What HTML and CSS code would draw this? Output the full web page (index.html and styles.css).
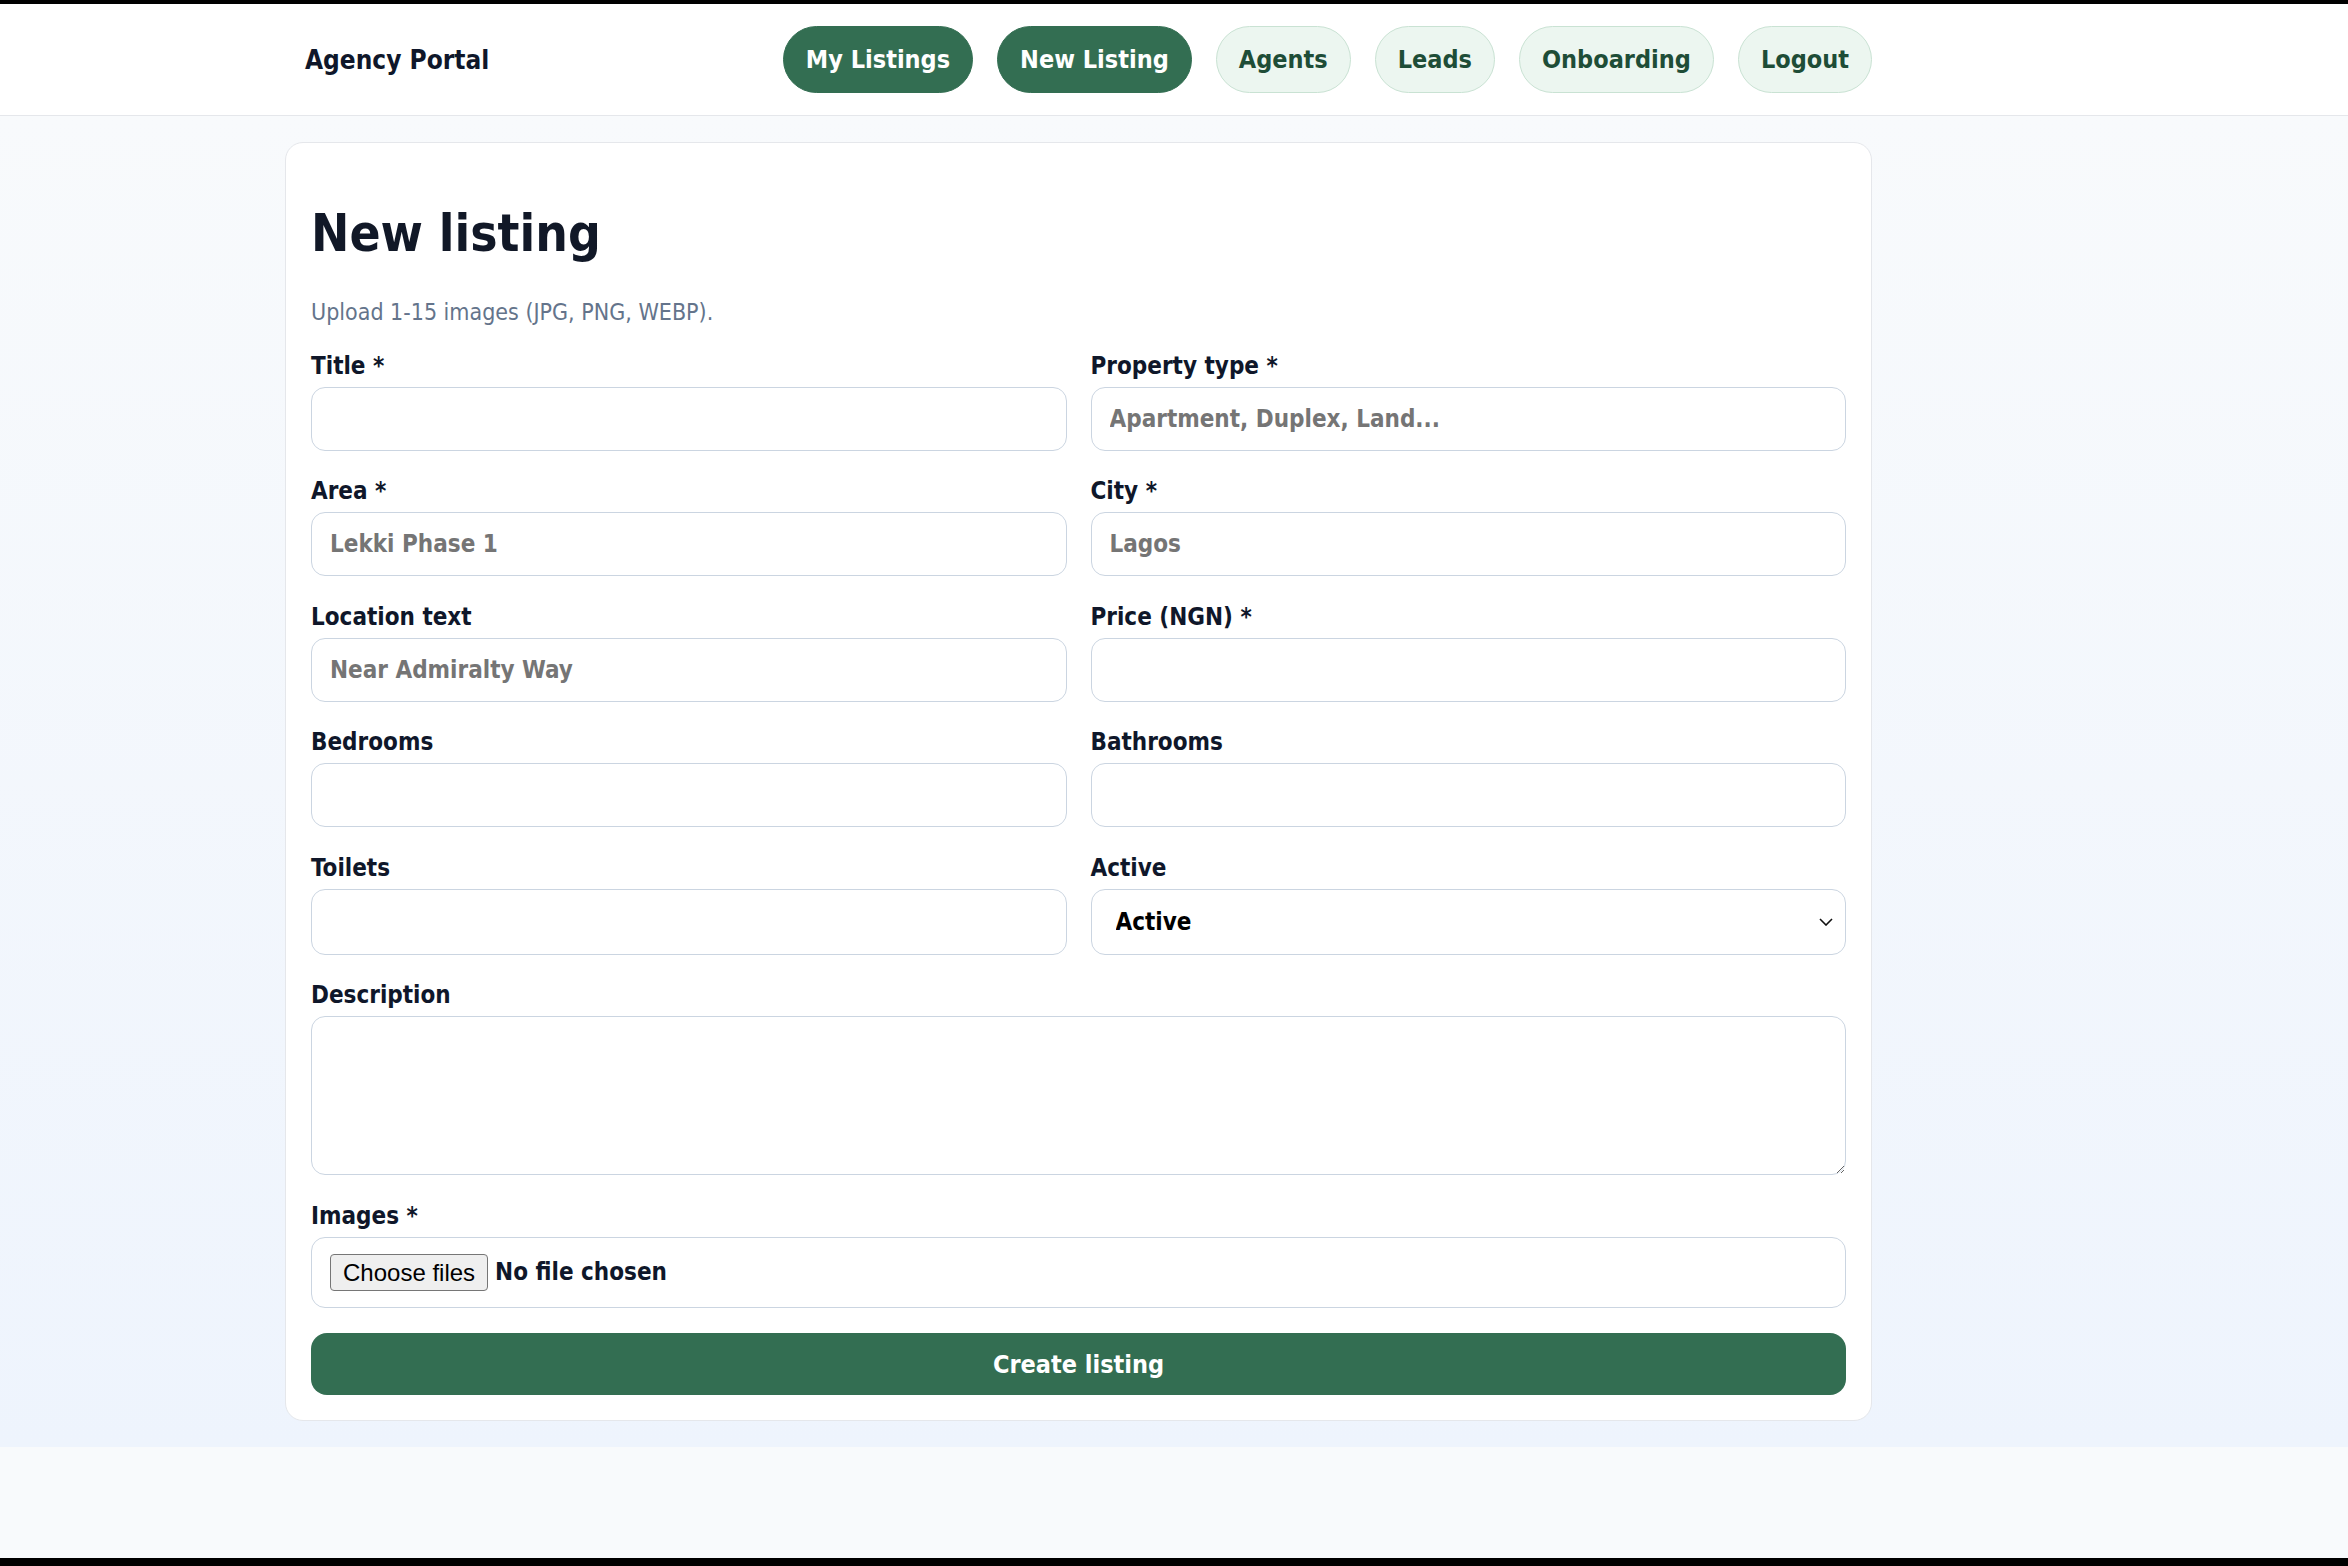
FILE: index.html
```html
<!DOCTYPE html>
<html lang="en">
<head>
  <meta charset="UTF-8" />
  <meta name="viewport" content="width=device-width, initial-scale=1.0" />
  <title>Agency Portal - New listing</title>
  <link rel="stylesheet" href="styles.css">
</head>
<body>
  <header class="topbar">
    <div class="topbar-inner">
      <div class="brand">Agency Portal</div>
      <nav class="nav">
        <a class="pill pill-active" href="#">My Listings</a>
        <a class="pill pill-active" href="#">New Listing</a>
        <a class="pill" href="#">Agents</a>
        <a class="pill" href="#">Leads</a>
        <a class="pill" href="#">Onboarding</a>
        <a class="pill" href="#">Logout</a>
      </nav>
    </div>
  </header>

  <main class="page">
    <section class="card">
      <h1>New listing</h1>
      <p class="hint">Upload 1-15 images (JPG, PNG, WEBP).</p>

      <form class="form-grid" onsubmit="return false">
        <div class="field">
          <label class="lbl" for="title">Title *</label>
          <input id="title" type="text" />
        </div>
        <div class="field">
          <label class="lbl" for="ptype">Property type *</label>
          <input id="ptype" type="text" placeholder="Apartment, Duplex, Land..." />
        </div>

        <div class="field">
          <label class="lbl" for="area">Area *</label>
          <input id="area" type="text" placeholder="Lekki Phase 1" />
        </div>
        <div class="field">
          <label class="lbl" for="city">City *</label>
          <input id="city" type="text" placeholder="Lagos" />
        </div>

        <div class="field">
          <label class="lbl" for="loc">Location text</label>
          <input id="loc" type="text" placeholder="Near Admiralty Way" />
        </div>
        <div class="field">
          <label class="lbl" for="price">Price (NGN) *</label>
          <input id="price" type="number" />
        </div>

        <div class="field">
          <label class="lbl" for="beds">Bedrooms</label>
          <input id="beds" type="number" />
        </div>
        <div class="field">
          <label class="lbl" for="baths">Bathrooms</label>
          <input id="baths" type="number" />
        </div>

        <div class="field">
          <label class="lbl" for="toilets">Toilets</label>
          <input id="toilets" type="number" />
        </div>
        <div class="field">
          <label class="lbl" for="active">Active</label>
          <div class="select-wrap">
            <select id="active">
              <option>Active</option>
              <option>Inactive</option>
            </select>
            <svg class="chevron" width="14" height="8" viewBox="0 0 14 8">
              <path d="M1 1l6 6 6-6" fill="none" stroke="#111" stroke-width="1.6" />
            </svg>
          </div>
        </div>

        <div class="field wide">
          <label class="lbl" for="desc">Description</label>
          <textarea id="desc"></textarea>
        </div>

        <div class="field wide">
          <label class="lbl" for="images">Images *</label>
          <label class="file-box">
            <input id="images" type="file" multiple accept="image/jpeg,image/png,image/webp" />
            <span class="file-btn">Choose files</span>
            <span class="file-name">No file chosen</span>
          </label>
        </div>

        <button class="submit wide" type="submit">Create listing</button>
      </form>
    </section>
  </main>
</body>
</html>
```

FILE: styles.css
```css
html {
  background: #000;
}

body {
  margin: 4px 0 0;
  height: 1554px;
  background: #f8fafc;
  font-family: 'DejaVu Sans', Verdana, sans-serif;
  font-stretch: condensed;
  color: #0f172a;
}

/* top navigation */
.topbar {
  background: #fff;
  border-bottom: 1px solid #e5e7eb;
  padding: 22px 0;
}

.topbar-inner {
  width: 1587px;
  margin-left: 285px;
  padding-left: 20px;
  box-sizing: border-box;
  display: flex;
  align-items: center;
  justify-content: space-between;
}

.brand {
  font-size: 26px;
  font-weight: bold;
}

.nav {
  display: flex;
  gap: 24px;
}

.pill {
  display: flex;
  align-items: center;
  height: 67px;
  box-sizing: border-box;
  padding: 0 22px;
  border-radius: 999px;
  border: 1.5px solid #c9e2d3;
  background: #ecf6f0;
  color: #1e4d37;
  font-size: 25px;
  font-weight: bold;
  text-decoration: none;
}

.pill-active {
  background: #336e52;
  border-color: #336e52;
  color: #fff;
}

/* main area */
.page {
  background: linear-gradient(180deg, #f8fafc 0%, #eef4fd 100%);
  padding: 26px 0;
}

.card {
  width: 1587px;
  margin-left: 285px;
  box-sizing: border-box;
  background: #fff;
  border: 1px solid #e5e7eb;
  border-radius: 18px;
  padding: 0 25px 25px;
}

.card h1 {
  font-size: 51px;
  line-height: 1.16;
  margin: 61px 0 32px;
  color: #111827;
}

.hint {
  font-size: 23px;
  line-height: 1.5;
  color: #64748b;
  margin: 0 0 21px;
  font-weight: normal;
}

/* form */
.form-grid {
  display: grid;
  grid-template-columns: 1fr 1fr;
  column-gap: 24px;
  row-gap: 25.5px;
}

.wide {
  grid-column: 1 / -1;
}

.field {
  display: flex;
  flex-direction: column;
}

.lbl {
  font-size: 24px;
  line-height: 30px;
  font-weight: bold;
  margin-bottom: 6px;
}

.field input,
.field select,
.field textarea,
.file-box {
  box-sizing: border-box;
  width: 100%;
  height: 64px;
  flex: 1 0 auto;
  border: 1.5px solid #cbd5e1;
  border-radius: 14px;
  background: #fff;
  padding: 0 18px;
  font-family: inherit;
  font-stretch: condensed;
  font-size: 24px;
  font-weight: bold;
  color: #0f172a;
}

.field input::placeholder {
  color: #757575;
}

.select-wrap {
  position: relative;
  flex: 1 0 auto;
  display: flex;
}

.field select {
  appearance: none;
  height: 66px;
  padding-left: 24px;
  color: #000;
}

.chevron {
  position: absolute;
  right: 13px;
  top: 29px;
  pointer-events: none;
}

.field textarea {
  height: 159px;
  padding: 14px 18px;
}

/* file picker */
.field .file-box {
  height: 71px;
  display: flex;
  align-items: center;
  gap: 7px;
  cursor: pointer;
}

.file-box input {
  display: none;
}

.file-btn {
  font-family: 'Liberation Sans', Arial, sans-serif;
  font-stretch: normal;
  font-size: 24px;
  font-weight: normal;
  line-height: 29px;
  padding: 3px 12px;
  color: #000;
  background: #efefef;
  border: 1px solid #767676;
  border-radius: 4px;
}

.submit {
  height: 62px;
  border: none;
  border-radius: 16px;
  background: #336e52;
  color: #fff;
  font-family: inherit;
  font-stretch: condensed;
  font-size: 25px;
  font-weight: bold;
  cursor: pointer;
}
```
